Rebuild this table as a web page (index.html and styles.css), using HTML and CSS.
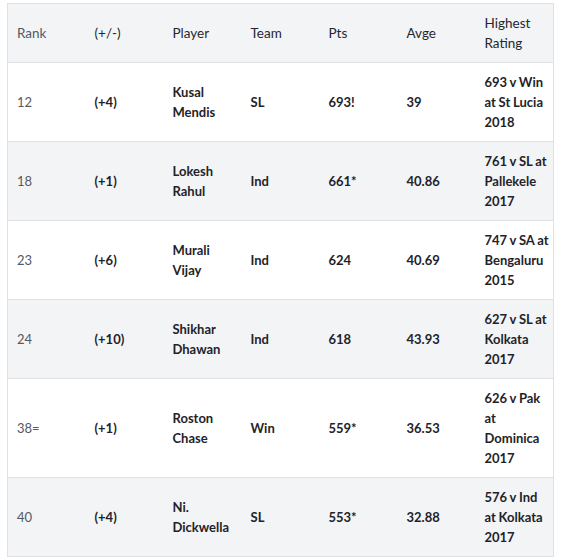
FILE: index.html
```html
<!DOCTYPE html>
<html>
<head>
<meta charset="utf-8">
<link rel="stylesheet" href="styles.css">
</head>
<body>
<table class="ranking">
  <colgroup>
    <col><col><col><col><col><col><col>
  </colgroup>
  <thead>
    <tr>
      <th>Rank</th><th>(+/-)</th><th>Player</th><th>Team</th><th>Pts</th><th>Avge</th><th>Highest Rating</th>
    </tr>
  </thead>
  <tbody>
    <tr><td>12</td><td>(+4)</td><td>Kusal Mendis</td><td>SL</td><td>693!</td><td>39</td><td>693 v Win at St Lucia 2018</td></tr>
    <tr><td>18</td><td>(+1)</td><td>Lokesh Rahul</td><td>Ind</td><td>661*</td><td>40.86</td><td>761 v SL at Pallekele 2017</td></tr>
    <tr><td>23</td><td>(+6)</td><td>Murali Vijay</td><td>Ind</td><td>624</td><td>40.69</td><td>747 v SA at Bengaluru 2015</td></tr>
    <tr><td>24</td><td>(+10)</td><td>Shikhar Dhawan</td><td>Ind</td><td>618</td><td>43.93</td><td>627 v SL at Kolkata 2017</td></tr>
    <tr><td>38=</td><td>(+1)</td><td>Roston Chase</td><td>Win</td><td>559*</td><td>36.53</td><td>626 v Pak at Dominica 2017</td></tr>
    <tr><td>40</td><td>(+4)</td><td>Ni. Dickwella</td><td>SL</td><td>553*</td><td>32.88</td><td>576 v Ind at Kolkata 2017</td></tr>
  </tbody>
</table>
</body>
</html>
```
FILE: styles.css
```css
html, body {
  background: #ffffff;
}
body {
  margin: 3px 0 0 7px;
  font-family: Lato, "Noto Sans", sans-serif;
  font-size: 13.5px;
  line-height: 20px;
  color: #222;
}
.ranking {
  width: 547px;
  border-collapse: collapse;
  table-layout: fixed;
  border: 1px solid #dfe1e4;
}
.ranking th,
.ranking td {
  border-top: 1px solid #dfe1e4;
  padding: 9px 3px 9px 9px;
  text-align: left;
  vertical-align: middle;
  font-weight: 700;
  color: #1f2329;
}
.ranking td {
  font-size: 13px;
  word-spacing: -0.4px;
}
.ranking th {
  font-weight: 400;
  color: #24282e;
}
.ranking thead tr {
  background: #f3f4f6;
}
.ranking tbody tr:nth-child(even) {
  background: #f3f4f6;
}
.ranking th:first-child,
.ranking td:first-child {
  font-weight: 400;
  color: #55595f;
}
```
